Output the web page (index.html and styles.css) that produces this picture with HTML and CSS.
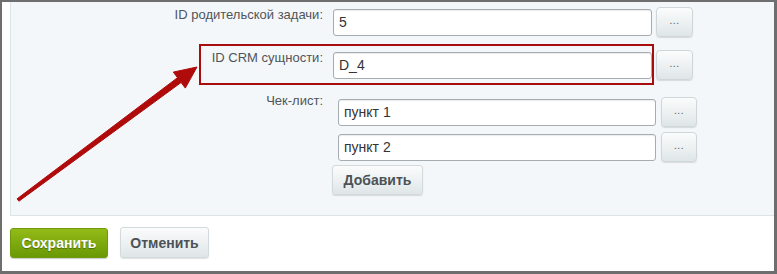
FILE: index.html
```html
<!DOCTYPE html>
<html lang="ru">
<head>
    <meta charset="UTF-8">
    <title>Задача</title>
    <link rel="stylesheet" href="styles.css">
</head>
<body>
    <div class="frame">
        <div class="panel">
            <!-- родительская задача -->
            <div class="row row-parent">
                <div class="label">ID родительской задачи:</div>
                <div class="field">
                    <input type="text" class="text" value="5">
                    <button class="dots">...</button>
                </div>
            </div>

            <!-- CRM -->
            <div class="row row-crm">
                <div class="label">ID CRM сущности:</div>
                <div class="field">
                    <input type="text" class="text" value="D_4">
                    <button class="dots">...</button>
                </div>
                <div class="mark"></div>
            </div>

            <!-- чек-лист -->
            <div class="row row-check">
                <div class="label">Чек-лист:</div>
                <div class="checklist">
                    <div class="field">
                        <input type="text" class="text" value="пункт 1">
                        <button class="dots">...</button>
                    </div>
                    <div class="field">
                        <input type="text" class="text" value="пункт 2">
                        <button class="dots">...</button>
                    </div>
                    <button class="btn add">Добавить</button>
                </div>
            </div>
        </div>

        <div class="footer">
            <button class="btn save">Сохранить</button>
            <button class="btn cancel">Отменить</button>
        </div>

        <svg class="arrow" width="777" height="274" viewBox="0 0 777 274">
            <polygon fill="#b00b0b" stroke="#b00b0b" stroke-width="1" stroke-linejoin="round"
                points="17.1,198.8 177.5,77.7 173.3,72.1 197,67 185.3,88.1 181.1,82.5 18.9,201.2"/>
        </svg>
    </div>
</body>
</html>
```

FILE: styles.css
```css
body {
    margin: 0;
    font-family: "Liberation Sans", Arial, sans-serif;
}
.frame {
    position: relative;
    box-sizing: border-box;
    width: 777px;
    height: 274px;
    border-style: solid;
    border-color: #6e6e6e;
    border-width: 2px 3px 3px 2px;
    padding-left: 8px;
    background: #fff;
}
.panel {
    box-sizing: border-box;
    height: 214px;
    padding-top: 5px;
    background-color: #f4f7f9;
    border-left: 1px solid #dbe4e9;
    border-bottom: 1px solid #dbe4e9;
}
.row {
    display: flex;
    align-items: flex-start;
}
.row-crm {
    position: relative;
    margin-top: 13px;
}
.row-check {
    margin-top: 17px;
}
.label {
    width: 312px;
    flex: none;
    text-align: right;
    font-size: 13px;
    line-height: 15px;
    color: #4f5559;
}
.row-check .label {
    margin-top: -4px;
}
.field {
    display: flex;
    align-items: center;
    gap: 4px;
    margin-left: 10px;
}
.text {
    box-sizing: border-box;
    width: 319px;
    height: 27px;
    margin: 0;
    padding: 0 5px;
    border: 1px solid #a5adb3;
    border-radius: 3px;
    background: #fff;
    box-shadow: inset 0 1px 1px rgba(0,0,0,0.08);
    font-family: "Liberation Sans", Arial, sans-serif;
    font-size: 14px;
    color: #333;
}
.dots {
    box-sizing: border-box;
    width: 37px;
    height: 30px;
    margin: 0;
    padding: 0 0 4px;
    border: 1px solid #d0d7db;
    border-radius: 4px;
    background: linear-gradient(#fbfcfc, #dfe6e8);
    box-shadow: 0 1px 1px rgba(0,0,0,0.12);
    font-family: "Liberation Sans", Arial, sans-serif;
    font-size: 10px;
    color: #50585c;
    letter-spacing: 0.5px;
}
.mark {
    position: absolute;
    left: 188px;
    top: -6px;
    width: 455px;
    height: 41px;
    box-sizing: border-box;
    border: 2px solid #a80c0c;
}
.checklist {
    display: flex;
    flex-direction: column;
    align-items: flex-start;
    gap: 5px;
    margin-left: 5px;
}
.checklist .field {
    gap: 5px;
}
.checklist .text {
    width: 318px;
}
.checklist .dots {
    width: 36px;
}
.btn {
    box-sizing: border-box;
    margin: 0;
    border-radius: 3px;
    font-family: "Liberation Sans", Arial, sans-serif;
    font-weight: bold;
    font-size: 14px;
}
.add {
    width: 91px;
    height: 30px;
    margin-top: -2px;
    margin-left: 4px;
    border: 1px solid #d3dadd;
    background: linear-gradient(#fbfcfc, #dfe6e8);
    box-shadow: 0 1px 1px rgba(0,0,0,0.12);
    color: #4d5256;
}
.footer {
    display: flex;
    align-items: center;
    gap: 12px;
    padding-top: 11px;
}
.save {
    width: 98px;
    height: 30px;
    border: 1px solid #6f9a0c;
    background: linear-gradient(#93bb18, #6a9905);
    box-shadow: 0 1px 1px rgba(0,0,0,0.2);
    color: #fff;
    text-shadow: 0 1px 1px rgba(0,0,0,0.35);
}
.cancel {
    width: 89px;
    height: 31px;
    border: 1px solid #d3dadd;
    background: linear-gradient(#fbfcfc, #dfe6e8);
    box-shadow: 0 1px 1px rgba(0,0,0,0.12);
    color: #4d5256;
}
.arrow {
    position: absolute;
    left: -2px;
    top: -2px;
    pointer-events: none;
}
```
